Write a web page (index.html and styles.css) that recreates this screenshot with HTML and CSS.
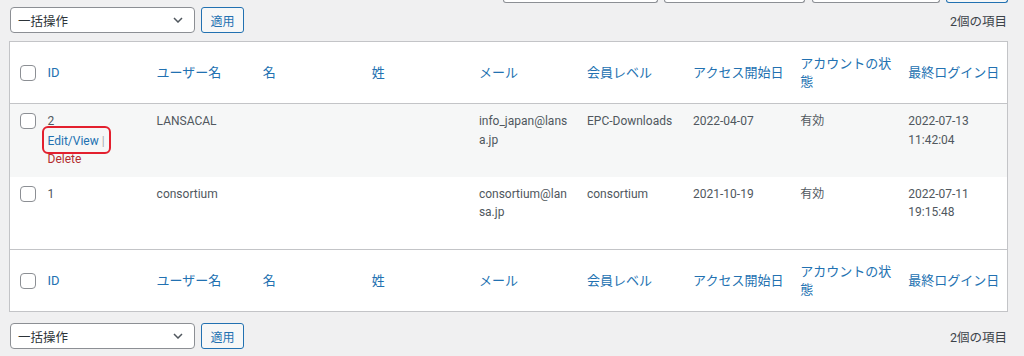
FILE: index.html
```html
<!DOCTYPE html>
<html lang="ja">
<head>
<meta charset="utf-8">
<title>ユーザー</title>
<link rel="stylesheet" href="styles.css">
</head>
<body>
<div class="wrap">
  <div class="filters-strip">
    <span class="stub stub-a"></span>
    <span class="stub stub-b"></span>
    <span class="stub stub-c"></span>
    <span class="stub stub-btn"></span>
  </div>

  <div class="tablenav tablenav-top">
    <div class="bulk">
      <div class="select">
        <span>一括操作</span>
        <svg class="chev" width="10" height="6" viewBox="0 0 10 6"><path d="M1 1l4 4 4-4" fill="none" stroke="#50575e" stroke-width="1.5"/></svg>
      </div>
      <button class="btn">適用</button>
    </div>
    <div class="count">2個の項目</div>
  </div>

  <table class="list">
    <colgroup>
      <col class="c-cb"><col class="c-id"><col class="c-user"><col class="c-first"><col class="c-last"><col class="c-mail"><col class="c-level"><col class="c-access"><col class="c-status"><col class="c-login">
    </colgroup>
    <thead>
      <tr>
        <th class="cb"><span class="check"></span></th>
        <th>ID</th><th>ユーザー名</th><th>名</th><th>姓</th><th>メール</th><th>会員レベル</th><th>アクセス開始日</th><th class="status">アカウントの状態</th><th>最終ログイン日</th>
      </tr>
    </thead>
    <tbody>
      <tr class="alt">
        <td class="cb"><span class="check"></span></td>
        <td>2
          <div class="row-actions">
            <span class="edit-wrap"><a class="edit">Edit/View</a><span class="sep"> | </span><span class="mark"></span></span><br>
            <a class="delete">Delete</a>
          </div>
        </td>
        <td>LANSACAL</td><td></td><td></td>
        <td class="mail">info_japan@lans<wbr>a.jp</td>
        <td class="nowrap">EPC-Downloads</td><td>2022-04-07</td><td>有効</td><td>2022-07-13 11:42:04</td>
      </tr>
      <tr>
        <td class="cb"><span class="check"></span></td>
        <td>1
          <div class="row-actions hidden">
            <a class="edit">Edit/View</a><span class="sep"> | </span><br>
            <a class="delete">Delete</a>
          </div>
        </td>
        <td>consortium</td><td></td><td></td>
        <td class="mail">consortium@lan<wbr>sa.jp</td>
        <td class="nowrap">consortium</td><td>2021-10-19</td><td>有効</td><td>2022-07-11 19:15:48</td>
      </tr>
    </tbody>
    <tfoot>
      <tr>
        <th class="cb"><span class="check"></span></th>
        <th>ID</th><th>ユーザー名</th><th>名</th><th>姓</th><th>メール</th><th>会員レベル</th><th>アクセス開始日</th><th class="status">アカウントの状態</th><th>最終ログイン日</th>
      </tr>
    </tfoot>
  </table>

  <div class="tablenav tablenav-bottom">
    <div class="bulk">
      <div class="select">
        <span>一括操作</span>
        <svg class="chev" width="10" height="6" viewBox="0 0 10 6"><path d="M1 1l4 4 4-4" fill="none" stroke="#50575e" stroke-width="1.5"/></svg>
      </div>
      <button class="btn">適用</button>
    </div>
    <div class="count">2個の項目</div>
  </div>
</div>
</body>
</html>
```

FILE: styles.css
```css
html, body {
  margin: 0;
  padding: 0;
  background: #f0f0f1;
}
body {
  font-family: Roboto, "Noto Sans CJK JP", sans-serif;
  font-size: 12px;
  color: #50575e;
}
.wrap {
  padding: 0 16px 0 9px;
  height: 356px;
  overflow: hidden;
}
.filters-strip {
  height: 3px;
  display: flex;
  align-items: flex-end;
  padding-left: 494px;
}
.stub {
  display: block;
  height: 3px;
  box-sizing: border-box;
  border: 1px solid #8c8f94;
  border-top: none;
  border-radius: 0 0 4px 4px;
  background: #fff;
}
.stub-a { width: 155px; }
.stub-b { width: 141px; margin-left: 6px; }
.stub-c { width: 128px; margin-left: 7px; }
.stub-btn { width: 62px; margin-left: 6px; border-color: #2271b1; background: #f6f7f7; }

.tablenav {
  display: flex;
  align-items: center;
  justify-content: space-between;
  height: 26px;
}
.tablenav-top { margin: 4px 0 8px; }
.tablenav-bottom { margin-top: 11px; }
.bulk {
  display: flex;
  align-items: center;
  gap: 6px;
  padding-left: 1px;
}
.select {
  width: 185px;
  height: 26px;
  box-sizing: border-box;
  border: 1px solid #8c8f94;
  border-radius: 4px;
  background: #fff;
  display: flex;
  align-items: center;
  justify-content: space-between;
  padding: 0 11px 0 7px;
  color: #2c3338;
  font-size: 12.5px;
}
.btn {
  height: 26px;
  width: 43px;
  box-sizing: border-box;
  border: 1px solid #2271b1;
  border-radius: 3px;
  background: #f6f7f7;
  color: #2271b1;
  font: inherit;
  font-size: 12px;
  padding: 0;
}
.count {
  color: #3c434a;
  padding-right: 1px;
  font-size: 12.5px;
}

.list {
  width: 999px;
  table-layout: fixed;
  border-collapse: collapse;
  background: #fff;
  border: 1px solid #c3c4c7;
}
.c-cb { width: 28px; }
.c-id { width: 109px; }
.c-user { width: 106px; }
.c-first { width: 109px; }
.c-last { width: 107px; }
.c-mail { width: 108px; }
.c-level { width: 106px; }
.c-access { width: 107px; }
.c-status { width: 108px; }
.c-login { width: 109px; }

.list th {
  height: 62px;
  box-sizing: border-box;
  padding: 0 4px 0 10px;
  text-align: left;
  font-weight: 400;
  font-size: 13px;
  color: #2271b1;
  vertical-align: middle;
  line-height: 18px;
}
.list thead tr { border-bottom: 1px solid #c3c4c7; }
.list tfoot tr { border-top: 1px solid #c3c4c7; }
.list th.cb, .list td.cb { padding: 0 0 0 10px; }
.list td {
  padding: 8px 4px 8px 10px;
  vertical-align: top;
  line-height: 18.5px;
  word-wrap: break-word;
}
.list td.cb { padding-top: 9px; }
.list td.mail { padding-right: 0; }
.list td.nowrap { white-space: nowrap; }
.list tr.alt td { background: #f6f7f7; }

.check {
  display: block;
  width: 16px;
  height: 16px;
  box-sizing: border-box;
  border: 1px solid #8c8f94;
  border-radius: 4px;
  background: #fff;
}

.row-actions { padding-top: 1px; }
.row-actions.hidden { visibility: hidden; }
.edit-wrap { position: relative; }
.edit { color: #2271b1; }
.sep { color: #a7aaad; }
.delete { color: #b32d2e; }
.mark {
  position: absolute;
  left: -6px;
  right: -6px;
  top: -8px;
  height: 28px;
  box-sizing: border-box;
  border: 2px solid #e3202e;
  border-radius: 6px;
}
```
